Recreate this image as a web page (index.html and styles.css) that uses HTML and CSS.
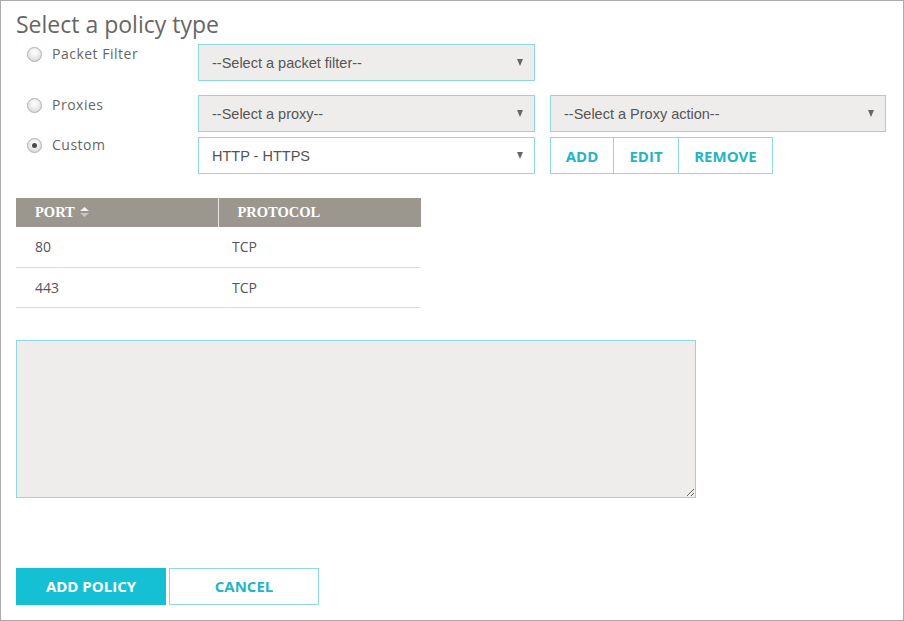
FILE: index.html
```html
<!DOCTYPE html>
<html>
<head>
<meta charset="utf-8">
<link rel="stylesheet" href="styles.css">
</head>
<body>
<div class="page">
  <h1 class="title">Select a policy type</h1>

  <div class="row row-1">
    <label class="opt"><span class="radio"></span><span class="opt-label">Packet Filter</span></label>
    <div class="select"><span>--Select a packet filter--</span><span class="caret"></span></div>
  </div>

  <div class="row row-2">
    <label class="opt"><span class="radio"></span><span class="opt-label">Proxies</span></label>
    <div class="select"><span>--Select a proxy--</span><span class="caret"></span></div>
    <div class="select select-wide"><span>--Select a Proxy action--</span><span class="caret"></span></div>
  </div>

  <div class="row row-3">
    <label class="opt"><span class="radio checked"></span><span class="opt-label">Custom</span></label>
    <div class="select select-white"><span>HTTP - HTTPS</span><span class="caret"></span></div>
    <div class="btn-group">
      <button class="gbtn gbtn-add">ADD</button>
      <button class="gbtn gbtn-edit">EDIT</button>
      <button class="gbtn gbtn-remove">REMOVE</button>
    </div>
  </div>

  <table class="ports">
    <thead>
      <tr>
        <th class="col-port">PORT <svg class="sort" width="9" height="12" viewBox="0 0 9 12"><path d="M0 5 L4.5 1 L9 5 Z" fill="#f4f3f1"/><path d="M0 7 L4.5 11 L9 7 Z" fill="#c9c6c1"/></svg></th>
        <th class="col-proto">PROTOCOL</th>
      </tr>
    </thead>
    <tbody>
      <tr><td class="c1">80</td><td class="c2">TCP</td></tr>
      <tr><td class="c1">443</td><td class="c2">TCP</td></tr>
    </tbody>
  </table>

  <textarea class="notes"></textarea>

  <div class="actions">
    <button class="btn btn-primary">ADD POLICY</button>
    <button class="btn btn-secondary">CANCEL</button>
  </div>
</div>
</body>
</html>
```

FILE: styles.css
```css
* { box-sizing: border-box; }
html, body { margin: 0; padding: 0; background: #fff; }
.page {
  width: 904px;
  height: 621px;
  border: 1px solid #ababab;
  padding: 0 15px;
  font-family: "Open Sans", "Liberation Sans", sans-serif;
  color: #666;
}
.title {
  margin: 8px 0 0 0;
  font-size: 23px;
  line-height: 31px;
  font-weight: 400;
  color: #666;
  height: 35px;
}
.row {
  display: flex;
  align-items: flex-start;
  gap: 15px;
}
.row-1 { margin-bottom: 14px; }
.row-2 { margin-bottom: 5px; }
.opt {
  width: 167px;
  display: flex;
  align-items: center;
  gap: 10px;
  padding-left: 11px;
  padding-top: 2px;
}
.row-3 .opt { padding-top: 0; }
.radio {
  width: 15px;
  height: 15px;
  border-radius: 50%;
  border: 1px solid #adadad;
  background: radial-gradient(circle at 50% 35%, #ffffff 0%, #ececec 45%, #cfcfcf 100%);
  display: flex;
  align-items: center;
  justify-content: center;
  flex: none;
}
.radio.checked::after {
  content: "";
  width: 5px;
  height: 5px;
  border-radius: 50%;
  background: #4a4a4a;
}
.opt-label {
  font-size: 14px;
  color: #666;
  line-height: 16px;
  letter-spacing: 0.5px;
}
.select {
  width: 337px;
  height: 37px;
  border: 1px solid #8fd8df;
  background: #eeedeb;
  display: flex;
  align-items: center;
  justify-content: space-between;
  padding: 0 11px 0 13px;
  font-family: "Liberation Sans", Arial, sans-serif;
  font-size: 14.5px;
  color: #555;
}
.select-wide { width: 336px; }
.select-white { background: #fff; }
.caret {
  width: 0;
  height: 0;
  border-left: 3.5px solid transparent;
  border-right: 3.5px solid transparent;
  border-top: 7px solid #666;
}
.btn-group {
  display: flex;
  height: 37px;
}
.gbtn {
  height: 37px;
  border: 1px solid #8fd8df;
  background: #fff;
  color: #26b4c5;
  font-family: "Open Sans", sans-serif;
  font-weight: 700;
  font-size: 15px;
  padding: 0;
  margin: 0;
}
.gbtn + .gbtn { border-left: none; }
.gbtn-add { width: 64px; }
.gbtn-edit { width: 65px; }
.gbtn-remove { width: 94px; }

.ports {
  margin-top: 24px;
  width: 405px;
  border-collapse: collapse;
}
.ports th {
  background: #9b978f;
  color: #fff;
  height: 29px;
  text-align: left;
  font-family: "Liberation Serif", "Times New Roman", serif;
  font-weight: 700;
  font-size: 14.5px;
  padding: 0;
  vertical-align: middle;
}
.col-port { width: 202px; padding-left: 19px !important; border-right: 1px solid #e8e6e2; }
.col-proto { padding-left: 19px !important; }
.sort { vertical-align: -1px; margin-left: 2px; }
.ports td {
  height: 40px;
  border-bottom: 1px solid #dddddd;
  font-size: 14px;
  color: #555;
  padding: 0;
}
.c1 { padding-left: 19px !important; }
.c2 { padding-left: 14px !important; }

.notes {
  display: block;
  margin: 32px 0 0 0;
  width: 680px;
  height: 158px;
  background: #eeedeb;
  border: 1px solid #8fd8df;
  resize: both;
  outline: none;
}
.actions {
  display: flex;
  gap: 3px;
  margin-top: 70px;
}
.btn {
  width: 150px;
  height: 37px;
  font-family: "Open Sans", sans-serif;
  font-weight: 700;
  font-size: 15px;
  padding: 0;
  margin: 0;
}
.btn-primary {
  background: #15bfd4;
  border: 1px solid #15bfd4;
  color: #fff;
}
.btn-secondary {
  background: #fff;
  border: 1px solid #8fd8df;
  color: #26b4c5;
}
```
